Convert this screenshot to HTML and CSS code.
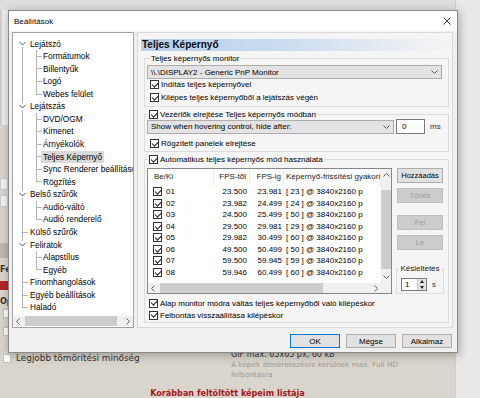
FILE: index.html
```html
<!DOCTYPE html>
<html lang="hu">
<head>
    <meta charset="UTF-8">
    <title>Beállítások</title>
    <link rel="stylesheet" href="styles.css">
</head>
<body>
<div class="screen">
    <div class="site">
        <div class="site-top"></div>
        <div class="site-body">
            <div class="edge-panel"></div>
            <div class="edge-field first"></div>
            <div class="edge-field"></div>
            <div class="edge-bar"></div>
            <div class="edge-title">Fe</div>
            <div class="edge-badge"></div>
            <div class="edge-title">Op</div>
            <div class="edge-box first"></div>
            <div class="edge-box"></div>
        </div>
        <div class="site-foot">
            <div class="foot-row">
                <div class="foot-left"><span class="site-check"></span>Legjobb tömörítési minőség</div>
                <div class="foot-right">
                    <div class="foot-limit">GIF max. 65x65 px, 60 kB</div>
                    <div class="foot-note">A képek átméretezésre kerülnek max. Full HD<br>felbontásra</div>
                </div>
            </div>
            <div class="foot-heading">Korábban feltöltött képeim listája</div>
        </div>
    </div>
    <div class="site-side"></div>

    <div class="dialog">
        <div class="titlebar">
            <span class="title">Beállítások</span>
            <svg class="close" width="8" height="8" viewBox="0 0 8 8"><path d="M0.5 0.5 L7.5 7.5 M7.5 0.5 L0.5 7.5" stroke="#222" stroke-width="0.9" fill="none"/></svg>
        </div>
        <div class="client">
            <div class="client-main">
                <!-- left tree -->
                <div class="tree">
                    <div class="tree-rows">
                        <div class="row top first"><span class="twisty"><svg width="7" height="5" viewBox="0 0 7 5"><path d="M0.5 1 L3.5 4 L6.5 1" stroke="#555" fill="none"/></svg></span><span class="label">Lejátszó</span></div>
                        <div class="row sub"><span class="label">Formátumok</span></div>
                        <div class="row sub"><span class="label">Billentyűk</span></div>
                        <div class="row sub"><span class="label">Logó</span></div>
                        <div class="row sub last"><span class="label">Webes felület</span></div>
                        <div class="row top"><span class="twisty"><svg width="7" height="5" viewBox="0 0 7 5"><path d="M0.5 1 L3.5 4 L6.5 1" stroke="#555" fill="none"/></svg></span><span class="label">Lejátszás</span></div>
                        <div class="row sub"><span class="label">DVD/OGM</span></div>
                        <div class="row sub"><span class="label">Kimenet</span></div>
                        <div class="row sub"><span class="label">Árnyékolók</span></div>
                        <div class="row sub"><span class="label selected">Teljes Képernyő</span></div>
                        <div class="row sub"><span class="label">Sync Renderer beállítások</span></div>
                        <div class="row sub last"><span class="label">Rögzítés</span></div>
                        <div class="row top"><span class="twisty"><svg width="7" height="5" viewBox="0 0 7 5"><path d="M0.5 1 L3.5 4 L6.5 1" stroke="#555" fill="none"/></svg></span><span class="label">Belső szűrők</span></div>
                        <div class="row sub"><span class="label">Audió-váltó</span></div>
                        <div class="row sub last"><span class="label">Audió renderelő</span></div>
                        <div class="row top leaf"><span class="label">Külső szűrők</span></div>
                        <div class="row top"><span class="twisty"><svg width="7" height="5" viewBox="0 0 7 5"><path d="M0.5 1 L3.5 4 L6.5 1" stroke="#555" fill="none"/></svg></span><span class="label">Feliratok</span></div>
                        <div class="row sub"><span class="label">Alapstílus</span></div>
                        <div class="row sub last"><span class="label">Egyéb</span></div>
                        <div class="row top leaf"><span class="label">Finomhangolások</span></div>
                        <div class="row top leaf"><span class="label">Egyéb beállítások</span></div>
                        <div class="row top leaf last"><span class="label">Haladó</span></div>
                    </div>
                    <div class="hscroll tree-scroll">
                        <div class="arrow"><svg width="4" height="7" viewBox="0 0 4 7"><path d="M3.5 0.5 L0.5 3.5 L3.5 6.5" stroke="#606060" fill="none"/></svg></div>
                        <div class="track"><div class="thumb"></div></div>
                        <div class="arrow"><svg width="4" height="7" viewBox="0 0 4 7"><path d="M0.5 0.5 L3.5 3.5 L0.5 6.5" stroke="#606060" fill="none"/></svg></div>
                    </div>
                </div>

                <!-- right page -->
                <div class="page">
                    <div class="page-head">Teljes Képernyő</div>

                    <div class="group g-monitor">
                        <div class="legend">Teljes képernyős monitor</div>
                        <div class="combo wide">
                            <span>\\.\DISPLAY2 - Generic PnP Monitor</span>
                            <svg width="7" height="4" viewBox="0 0 7 4"><path d="M0.5 0.5 L3.5 3.5 L6.5 0.5" stroke="#555" fill="none"/></svg>
                        </div>
                        <div class="check-row first"><span class="cb"></span>Indítás teljes képernyővel</div>
                        <div class="check-row"><span class="cb"></span>Kilépes teljes képernyőből a lejátszás végén</div>
                    </div>

                    <div class="group g-controls">
                        <div class="legend"><span class="cb"></span>Vezérlők elrejtése Teljes képernyős módban</div>
                        <div class="hide-row">
                            <div class="combo short">
                                <span>Show when hovering control, hide after:</span>
                                <svg width="7" height="4" viewBox="0 0 7 4"><path d="M0.5 0.5 L3.5 3.5 L6.5 0.5" stroke="#555" fill="none"/></svg>
                            </div>
                            <div class="edit">0</div>
                            <span class="unit">ms</span>
                        </div>
                        <div class="check-row spaced"><span class="cb"></span>Rögzített panelek elrejtése</div>
                    </div>

                    <div class="group g-auto">
                        <div class="legend"><span class="cb"></span>Automatikus teljes képernyős mód használata</div>
                        <div class="auto-main">
                            <div class="list">
                                <div class="list-body">
                                    <div class="list-head">
                                        <div class="c1">Be/Ki</div>
                                        <div class="c2">FPS-től</div>
                                        <div class="c3">FPS-ig</div>
                                        <div class="c4">Képernyő-frissítési gyakorisága</div>
                                    </div>
                                    <div class="list-row"><div class="c1"><span class="cb"></span>01</div><div class="c2">23.500</div><div class="c3">23.981</div><div class="c4">[ 23 ] @ 3840x2160 p</div></div>
                                    <div class="list-row"><div class="c1"><span class="cb"></span>02</div><div class="c2">23.982</div><div class="c3">24.499</div><div class="c4">[ 24 ] @ 3840x2160 p</div></div>
                                    <div class="list-row"><div class="c1"><span class="cb"></span>03</div><div class="c2">24.500</div><div class="c3">25.499</div><div class="c4">[ 50 ] @ 3840x2160 p</div></div>
                                    <div class="list-row"><div class="c1"><span class="cb"></span>04</div><div class="c2">29.500</div><div class="c3">29.981</div><div class="c4">[ 29 ] @ 3840x2160 p</div></div>
                                    <div class="list-row"><div class="c1"><span class="cb"></span>05</div><div class="c2">29.982</div><div class="c3">30.499</div><div class="c4">[ 60 ] @ 3840x2160 p</div></div>
                                    <div class="list-row"><div class="c1"><span class="cb"></span>06</div><div class="c2">49.500</div><div class="c3">50.499</div><div class="c4">[ 50 ] @ 3840x2160 p</div></div>
                                    <div class="list-row"><div class="c1"><span class="cb"></span>07</div><div class="c2">59.500</div><div class="c3">59.945</div><div class="c4">[ 59 ] @ 3840x2160 p</div></div>
                                    <div class="list-row"><div class="c1"><span class="cb"></span>08</div><div class="c2">59.946</div><div class="c3">60.499</div><div class="c4">[ 60 ] @ 3840x2160 p</div></div>
                                </div>
                                <div class="vscroll">
                                    <div class="arrow"><svg width="7" height="4" viewBox="0 0 7 4"><path d="M0.5 3.5 L3.5 0.5 L6.5 3.5" stroke="#606060" fill="none"/></svg></div>
                                    <div class="track"><div class="thumb"></div></div>
                                    <div class="arrow"><svg width="7" height="4" viewBox="0 0 7 4"><path d="M0.5 0.5 L3.5 3.5 L6.5 0.5" stroke="#606060" fill="none"/></svg></div>
                                </div>
                                <div class="hscroll list-scroll">
                                    <div class="arrow"><svg width="4" height="7" viewBox="0 0 4 7"><path d="M3.5 0.5 L0.5 3.5 L3.5 6.5" stroke="#606060" fill="none"/></svg></div>
                                    <div class="track"><div class="thumb"></div></div>
                                    <div class="arrow"><svg width="4" height="7" viewBox="0 0 4 7"><path d="M0.5 0.5 L3.5 3.5 L0.5 6.5" stroke="#606060" fill="none"/></svg></div>
                                </div>
                                <div class="corner"></div>
                            </div>
                            <div class="side-buttons">
                                <button class="btn side">Hozzáadás</button>
                                <button class="btn side off">Törlés</button>
                                <button class="btn side off far">Fel</button>
                                <button class="btn side off">Le</button>
                                <div class="delay">
                                    <div class="legend">Késleltetés</div>
                                    <div class="delay-row">
                                        <div class="spin">
                                            <span class="spin-val">1</span>
                                            <span class="spin-btns"><i class="up"></i><i class="down"></i></span>
                                        </div>
                                        <span class="unit">s</span>
                                    </div>
                                </div>
                            </div>
                        </div>
                        <div class="check-row low"><span class="cb"></span>Alap monitor módra váltás teljes képernyőből való kilépéskor</div>
                        <div class="check-row low"><span class="cb"></span>Felbontás visszaállítása kilépéskor</div>
                    </div>
                </div>
            </div>
            <div class="dialog-buttons">
                <button class="btn main default">OK</button>
                <button class="btn main">Mégse</button>
                <button class="btn main">Alkalmaz</button>
            </div>
        </div>
    </div>
</div>
</body>
</html>
```

FILE: styles.css
```css
* {
    box-sizing: border-box;
}

body {
    margin: 0;
    width: 480px;
    height: 398px;
    overflow: hidden;
    font-family: "Liberation Sans", Arial, sans-serif;
    font-size: 8px;
    color: #000;
}

.screen {
    position: relative;
    display: flex;
    width: 480px;
    height: 398px;
    background: #dad5cc;
}

/* website behind the dialog */
.site {
    flex: 1;
    display: flex;
    flex-direction: column;
    font-family: "DejaVu Sans", Verdana, sans-serif;
}

.site-top {
    height: 10px;
    background: #dedede;
}

.site-body {
    flex: 1;
}

.site-side {
    width: 25px;
    background: #e9e8e6;
    border-left: 1px solid #d2cfca;
}

.edge-panel {
    width: 8px;
    height: 115px;
    background: #eeeeee;
    border-left: 2px solid #d0d0d0;
}

.edge-field {
    width: 8px;
    height: 12px;
    margin-top: 5px;
    background: #f3f3f3;
    border: 1px solid #cbcbcb;
}

.edge-field.first {
    margin-top: 53px;
}

.edge-bar {
    width: 8px;
    height: 15px;
    margin-top: 36px;
    background: #bdb8b1;
}

.edge-title {
    margin-top: 6px;
    line-height: 12px;
    font-weight: bold;
    font-size: 8px;
    color: #333;
}

.edge-badge {
    width: 8px;
    height: 9px;
    margin-top: 5px;
    background: #b3262a;
}

.edge-box {
    width: 6px;
    height: 9px;
    margin: 9px 0 0 3px;
    background: #fff;
    border: 1px solid #c4c4c4;
}

.edge-box.first {
    margin-top: 1px;
}

.site-foot {
    height: 50px;
}

.foot-row {
    display: flex;
    height: 40px;
}

.foot-left {
    width: 231px;
    display: flex;
    align-items: center;
    align-self: flex-start;
    margin-top: 5px;
    padding-left: 3px;
    font-size: 8.9px;
    color: #333;
    line-height: 10px;
}

.site-check {
    width: 8px;
    height: 9px;
    margin-right: 5px;
    background: #fff;
    border: 1px solid #c4c4c4;
}

.foot-right {
    padding-top: 1px;
}

.foot-limit {
    line-height: 11px;
    font-size: 8px;
    color: #333;
}

.foot-note {
    line-height: 10px;
    font-size: 7.3px;
    color: #9a9a9a;
}

.foot-heading {
    text-align: center;
    line-height: 11px;
    font-weight: bold;
    font-size: 8.1px;
    color: #a3191e;
}

/* the dialog window */
.dialog {
    position: absolute;
    left: 8px;
    top: 10px;
    width: 450px;
    height: 343px;
    display: flex;
    flex-direction: column;
    border: 1px solid #8a8a8a;
    box-shadow: 1px 2px 9px rgba(0, 0, 0, 0.3);
    background: #f0f0f0;
}

.titlebar {
    height: 20px;
    display: flex;
    align-items: center;
    justify-content: space-between;
    padding: 0 6px 0 5px;
    background: #fff;
}

.close {
    display: block;
}

.client {
    flex: 1;
    display: flex;
    flex-direction: column;
    padding: 1px 4px 0 3px;
}

.client-main {
    display: flex;
    gap: 3px;
    height: 296px;
}

/* tree */
.tree {
    width: 122px;
    display: flex;
    flex-direction: column;
    background: #fff;
    border: 1px solid #a3a3a3;
}

.tree-rows {
    flex: 1;
    padding-top: 4.5px;
    overflow: hidden;
    font-size: 8.3px;
    --ln: linear-gradient(#b3b3b3, #b3b3b3);
}

.row {
    display: flex;
    align-items: center;
    height: 12.57px;
    white-space: nowrap;
}

.row .label {
    padding: 0 2px;
    line-height: 12.57px;
}

.row .label.selected {
    background: #d9d9d9;
}

.row.top {
    padding-left: 6px;
    background: var(--ln) 9px 0 / 1px 100% no-repeat;
}

.row.top.first {
    background: var(--ln) 9px 100% / 1px 50% no-repeat;
}

.row.top.leaf {
    padding-left: 15px;
    background: var(--ln) 9px 0 / 1px 100% no-repeat, var(--ln) 9px 50% / 6px 1px no-repeat;
}

.row.top.leaf.last {
    background: var(--ln) 9px 0 / 1px 50% no-repeat, var(--ln) 9px 50% / 6px 1px no-repeat;
}

.twisty {
    width: 7px;
    height: 7px;
    margin-right: 2px;
    display: flex;
    align-items: center;
    background: #fff;
}

.twisty svg {
    display: block;
}

.row.sub {
    padding-left: 28px;
    background: var(--ln) 9px 0 / 1px 100% no-repeat, var(--ln) 23px 0 / 1px 100% no-repeat, var(--ln) 23px 50% / 6px 1px no-repeat;
}

.row.sub.last {
    background: var(--ln) 9px 0 / 1px 100% no-repeat, var(--ln) 23px 0 / 1px 50% no-repeat, var(--ln) 23px 50% / 6px 1px no-repeat;
}

/* scrollbars */
.hscroll {
    display: flex;
    height: 10px;
    background: #f0f0f0;
}

.hscroll .arrow {
    width: 10px;
    display: flex;
    align-items: center;
    justify-content: center;
}

.hscroll .track {
    flex: 1;
}

.hscroll .thumb {
    height: 100%;
    background: #cdcdcd;
}

.tree-scroll {
    margin-bottom: 1px;
}

.tree-scroll .thumb {
    width: 92px;
    margin-left: 2px;
}

.list-scroll .thumb {
    width: 163px;
    margin-left: 2px;
}

.vscroll {
    display: flex;
    flex-direction: column;
    background: #f0f0f0;
}

.vscroll .arrow {
    height: 12px;
    display: flex;
    align-items: center;
    justify-content: center;
}

.vscroll .track {
    flex: 1;
}

.vscroll .thumb {
    height: 79px;
    margin-top: 9px;
    background: #cdcdcd;
}

/* right page */
.page {
    width: 316px;
    display: flex;
    flex-direction: column;
    padding: 6px 0 0 0;
    background: #f5f5f5;
    border: 1px solid #dadada;
}

.page-head {
    height: 12px;
    margin-left: 3px;
    padding-left: 1px;
    line-height: 12px;
    font-weight: bold;
    font-size: 10px;
    color: #0a0a14;
    background: linear-gradient(to right, #b7cee8, #cadcef 45%, #f5f5f5);
}

.group {
    display: flex;
    flex-direction: column;
    margin: 7px 3px 0 6px;
    border: 1px solid #dcdcdc;
}

.legend {
    align-self: flex-start;
    display: flex;
    align-items: center;
    gap: 2px;
    margin: -6px 0 0 5px;
    padding: 0 1px;
    line-height: 11px;
    background: #f5f5f5;
    white-space: nowrap;
}

.g-controls .legend,
.g-auto .legend {
    margin-left: 3px;
}

.g-monitor {
    padding-bottom: 2px;
}

.g-controls {
    padding-bottom: 1px;
}

.g-auto {
    padding-bottom: 1px;
}

.combo {
    height: 14px;
    display: flex;
    align-items: center;
    justify-content: space-between;
    padding: 0 3px 0 3px;
    background: #e3e3e3;
    border: 1px solid #adadad;
    white-space: nowrap;
}

.combo.wide {
    margin: 1px 6px 0 2px;
}

.check-row {
    height: 13px;
    display: flex;
    align-items: center;
    gap: 2px;
    padding-left: 5px;
    white-space: nowrap;
}

.check-row.first {
    margin-top: -1px;
}

.check-row.spaced {
    margin-top: 3px;
}

.check-row.low {
    height: 12px;
    padding-left: 4px;
}

.auto-main + .check-row {
    margin-top: 3px;
}

.cb {
    flex: none;
    width: 9px;
    height: 9px;
    display: inline-flex;
    align-items: center;
    justify-content: center;
    background: #fff;
    border: 1px solid #333;
}

.cb::after {
    content: "";
    width: 5px;
    height: 2.5px;
    border-left: 1px solid #1a1a1a;
    border-bottom: 1px solid #1a1a1a;
    transform: translateY(-0.8px) rotate(-45deg);
}

.hide-row {
    display: flex;
    align-items: center;
    margin: -1px 0 0 2px;
}

.combo.short {
    width: 247px;
}

.edit {
    width: 29px;
    height: 15px;
    margin-left: 2px;
    padding-left: 5px;
    line-height: 13px;
    background: #fff;
    border: 1px solid #7a7a7a;
}

.unit {
    margin-left: 5px;
    color: #333;
}

/* auto fullscreen list */
.auto-main {
    display: flex;
    gap: 4px;
    margin: 3px 4px 0 2px;
}

.list {
    width: 245px;
    height: 126px;
    display: grid;
    grid-template-columns: 1fr 10px;
    grid-template-rows: 1fr 10px;
    background: #fff;
    border: 1px solid #828790;
}

.list-body {
    overflow: hidden;
}

.list-head,
.list-row {
    display: grid;
    grid-template-columns: 66px 36px 34px 97px;
    white-space: nowrap;
}

.list-head {
    height: 17px;
    line-height: 16px;
    color: #222;
}

.list-head > div {
    border-right: 1px solid #ececec;
}

.list-row {
    height: 11.5px;
    line-height: 11.5px;
}

.list-head .c1 {
    padding-left: 6px;
}

.list-row .c1 {
    display: flex;
    align-items: center;
    gap: 4px;
    padding-left: 5px;
}

.c2 {
    text-align: right;
    padding-right: 3px;
}

.c3 {
    text-align: right;
    padding-right: 2px;
}

.c4 {
    padding-left: 2px;
    overflow: hidden;
}

.corner {
    background: #f0f0f0;
}

.side-buttons {
    width: 48px;
    display: flex;
    flex-direction: column;
}

.btn {
    font-family: inherit;
    color: #000;
    background: #e1e1e1;
    border: 1px solid #adadad;
    padding: 0;
    margin: 0;
}

.btn.side {
    height: 15px;
    margin: 0 1px 5px 1px;
    font-size: 7.5px;
}

.btn.side.off {
    background: #cccccc;
    border-color: #bfbfbf;
    color: #9c9c9c;
}

.btn.side.far {
    margin-top: 7px;
}

.delay {
    display: flex;
    flex-direction: column;
    height: 25px;
    margin-top: 14px;
    border: 1px solid #dcdcdc;
}

.delay .legend {
    align-self: center;
    margin: -6px 0 0 0;
    line-height: 10px;
    padding: 0 1px;
    color: #222;
}

.delay-row {
    display: flex;
    align-items: center;
    margin: 4px 0 0 4px;
}

.spin {
    width: 26px;
    height: 13px;
    display: flex;
    justify-content: space-between;
    background: #fff;
    border: 1px solid #7a7a7a;
}

.spin-val {
    padding-left: 3px;
    line-height: 11px;
}

.spin-btns {
    width: 9px;
    display: flex;
    flex-direction: column;
    background: #e3e3e3;
    border-left: 1px solid #c8c8c8;
}

.spin-btns i {
    flex: 1;
    display: flex;
    align-items: center;
    justify-content: center;
}

.spin-btns i::after {
    content: "";
    border-left: 2px solid transparent;
    border-right: 2px solid transparent;
}

.spin-btns .up::after {
    border-bottom: 3px solid #222;
}

.spin-btns .down::after {
    border-top: 3px solid #222;
}

/* dialog buttons */
.dialog-buttons {
    display: flex;
    justify-content: flex-end;
    gap: 6px;
    margin-top: 6px;
    padding-right: 1px;
}

.btn.main {
    width: 50px;
    height: 14px;
    font-size: 8px;
}

.btn.main.default {
    border-color: #0078d7;
}
```
